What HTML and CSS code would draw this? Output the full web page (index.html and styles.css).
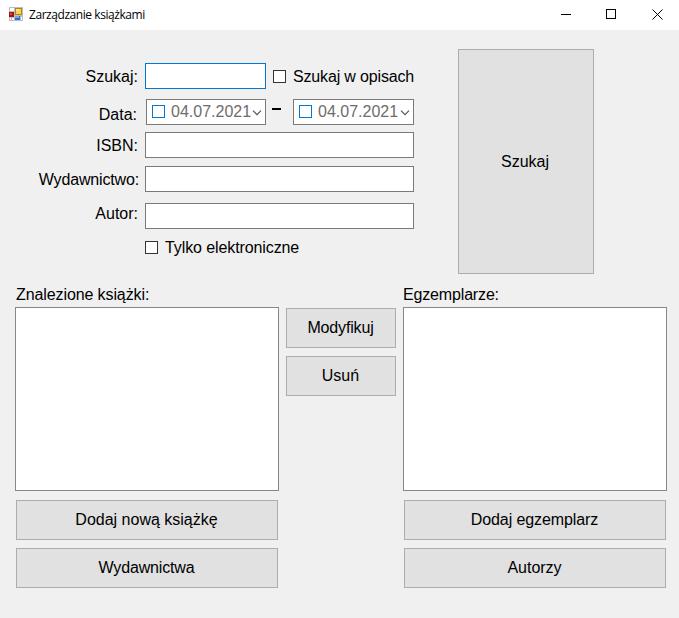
FILE: index.html
```html
<!DOCTYPE html>
<html lang="pl">
<head>
<meta charset="utf-8">
<title>Zarządzanie książkami</title>
<link rel="stylesheet" href="styles.css">
</head>
<body>
<header class="titlebar">
  <svg class="app-icon" width="14" height="14" viewBox="0 0 14 14" shape-rendering="crispEdges">
    <path fill="#bdbdbd" d="M0 0h14v14H0z"/>
    <path fill="#fff" d="M1 1h4v3H1zM1 11h1v2H1zM3 11h2v2H3zM12 10h1v3h-1z"/>
    <path fill="#a31515" d="M0 5h5v5H0z"/><path fill="#e04a3c" d="M1 6h2v2H1z"/>
    <path fill="#b8860b" d="M6 1h7v7H6z"/><path fill="#ffd04a" d="M7 2h5v5H7z"/><path fill="#ffe79a" d="M7 2h3v2H7z"/>
    <path fill="#3568c8" d="M6 9h5v4H6z"/><path fill="#78a8f5" d="M6 9h4v2H6z"/>
  </svg>
  <span class="title">Zarządzanie książkami</span>
  <svg class="controls" width="102" height="12" viewBox="0 0 102 12" fill="none" stroke="#000">
    <path d="M0 5.5h10M45.500 .5h9v9h-9z" shape-rendering="crispEdges"/>
    <path d="M91.500 .5l10 10M101.500 .5l-10 10"/>
  </svg>
</header>
<main class="window">
  <section class="search">
    <div class="fields">
      <div class="row row-query">
        <label class="label">Szukaj:</label>
        <div class="input short focused"></div>
        <div class="check in-row"><i class="box"></i><span class="tight">Szukaj w opisach</span></div>
      </div>
      <div class="row row-date">
        <label class="label">Data:</label>
        <div class="input date first"><i class="box blue"></i><span class="value">04.07.2021</span><svg width="10" height="6" viewBox="0 0 10 6"><path d="M1 .7l4 4 4-4" fill="none" stroke="#555" stroke-width="1.200"/></svg></div>
        <i class="dash"></i>
        <div class="input date"><i class="box blue"></i><span class="value">04.07.2021</span><svg width="10" height="6" viewBox="0 0 10 6"><path d="M1 .7l4 4 4-4" fill="none" stroke="#555" stroke-width="1.200"/></svg></div>
      </div>
      <div class="row row-isbn"><label class="label">ISBN:</label><div class="input long"></div></div>
      <div class="row row-publisher"><label class="label tight">Wydawnictwo:</label><div class="input long"></div></div>
      <div class="row row-author"><label class="label">Autor:</label><div class="input long"></div></div>
      <div class="check electronic"><i class="box"></i><span class="snug">Tylko elektroniczne</span></div>
    </div>
    <button class="btn search-btn"><span>Szukaj</span></button>
  </section>
  <section class="results">
    <div class="panel">
      <h2 class="snug">Znalezione książki:</h2>
      <div class="list"></div>
      <button class="btn"><span>Dodaj nową książkę</span></button>
      <button class="btn"><span class="tight">Wydawnictwa</span></button>
    </div>
    <div class="actions">
      <button class="btn"><span class="tight">Modyfikuj</span></button>
      <button class="btn"><span>Usuń</span></button>
    </div>
    <div class="panel">
      <h2 class="tight copies">Egzemplarze:</h2>
      <div class="list"></div>
      <button class="btn"><span class="snug">Dodaj egzemplarz</span></button>
      <button class="btn"><span>Autorzy</span></button>
    </div>
  </section>
</main>
</body>
</html>
```
FILE: styles.css
```css
* { box-sizing: border-box; }
body { margin: 0; width: 679px; height: 618px; overflow: hidden; background: #f0f0f0; color: #000; font: 16px/20px "Liberation Sans", Arial, sans-serif; }
.titlebar { display: flex; height: 30px; background: #fff; padding: 0 16px 0 9px; }
.app-icon { margin-top: 7px; flex: none; }
.title { margin: 5px 0 0 6px; font: 12px/20px "Open Sans", "Noto Sans", sans-serif; letter-spacing: -0.44px; white-space: nowrap; }
.controls { margin: 9px 0 0 auto; flex: none; }
.window { padding: 19px 12px 0 15px; }
.search { display: flex; height: 225px; }
.fields { width: 443px; padding-top: 14px; }
.tight { letter-spacing: -0.16px; }
.snug { letter-spacing: -0.1px; }
.row { display: flex; }
.label { width: 130px; padding-right: 7px; text-align: right; white-space: nowrap; }
.input { height: 26px; border: 1px solid #7a7a7a; background: #fff; flex: none; }
.short { width: 121px; }
.long { width: 269px; }
.focused { border-color: #0078d7; }
.row-query { height: 36px; }
.row-query .label { padding-top: 4px; }
.row-date { height: 33px; }
.row-date .label { padding: 6px 8px 0 0; }
.row-isbn { height: 34px; }
.row-isbn .label { padding-top: 4px; }
.row-publisher { height: 37px; }
.row-publisher .label { padding: 4px 6px 0 0; }
.row-author { height: 35px; }
.row-author .label { padding-top: 1px; }
.box { width: 13px; height: 13px; border: 1px solid #333; background: #fff; flex: none; }
.blue { border-color: #0078d7; }
.check { display: flex; align-items: center; gap: 7px; height: 20px; white-space: nowrap; }
.in-row { margin: 3px 0 0 7px; }
.in-row span { padding-top: 1px; }
.electronic { margin-left: 130px; margin-top: -1px; }
.electronic span { padding-top: 1px; }
.date { display: flex; align-items: center; width: 121px; padding-left: 5px; }
.date .box { margin-top: -1px; }
.date.first { width: 120px; margin-left: 1px; }
.date svg { margin: 2px 3px 0 auto; flex: none; }
.value { width: 80px; margin-left: 6px; color: #6d6d6d; white-space: nowrap; }
.dash { width: 9px; height: 2px; margin: 9px 12px 0 6px; background: #000; }
.btn { display: flex; align-items: center; justify-content: center; width: 262px; height: 40px; padding: 0; border: 1px solid #adadad; border-radius: 0; background: #e1e1e1; color: #000; font: inherit; }
.search-btn { width: 136px; height: 225px; padding-right: 2px; }
.results { display: flex; justify-content: space-between; padding-top: 11px; }
.panel { width: 264px; display: flex; flex-direction: column; align-items: center; gap: 8px; }
h2 { width: 100%; height: 14px; margin: 0; padding-left: 1px; font: inherit; white-space: nowrap; }
.copies { padding-left: 0; }
.list { width: 264px; height: 184px; border: 1px solid #828790; background: #fff; margin-bottom: 1px; }
.actions { display: flex; flex-direction: column; gap: 8px; padding-top: 23px; }
.actions .btn { width: 110px; padding-right: 1px; }
.panel .btn { padding-right: 1px; }
```
